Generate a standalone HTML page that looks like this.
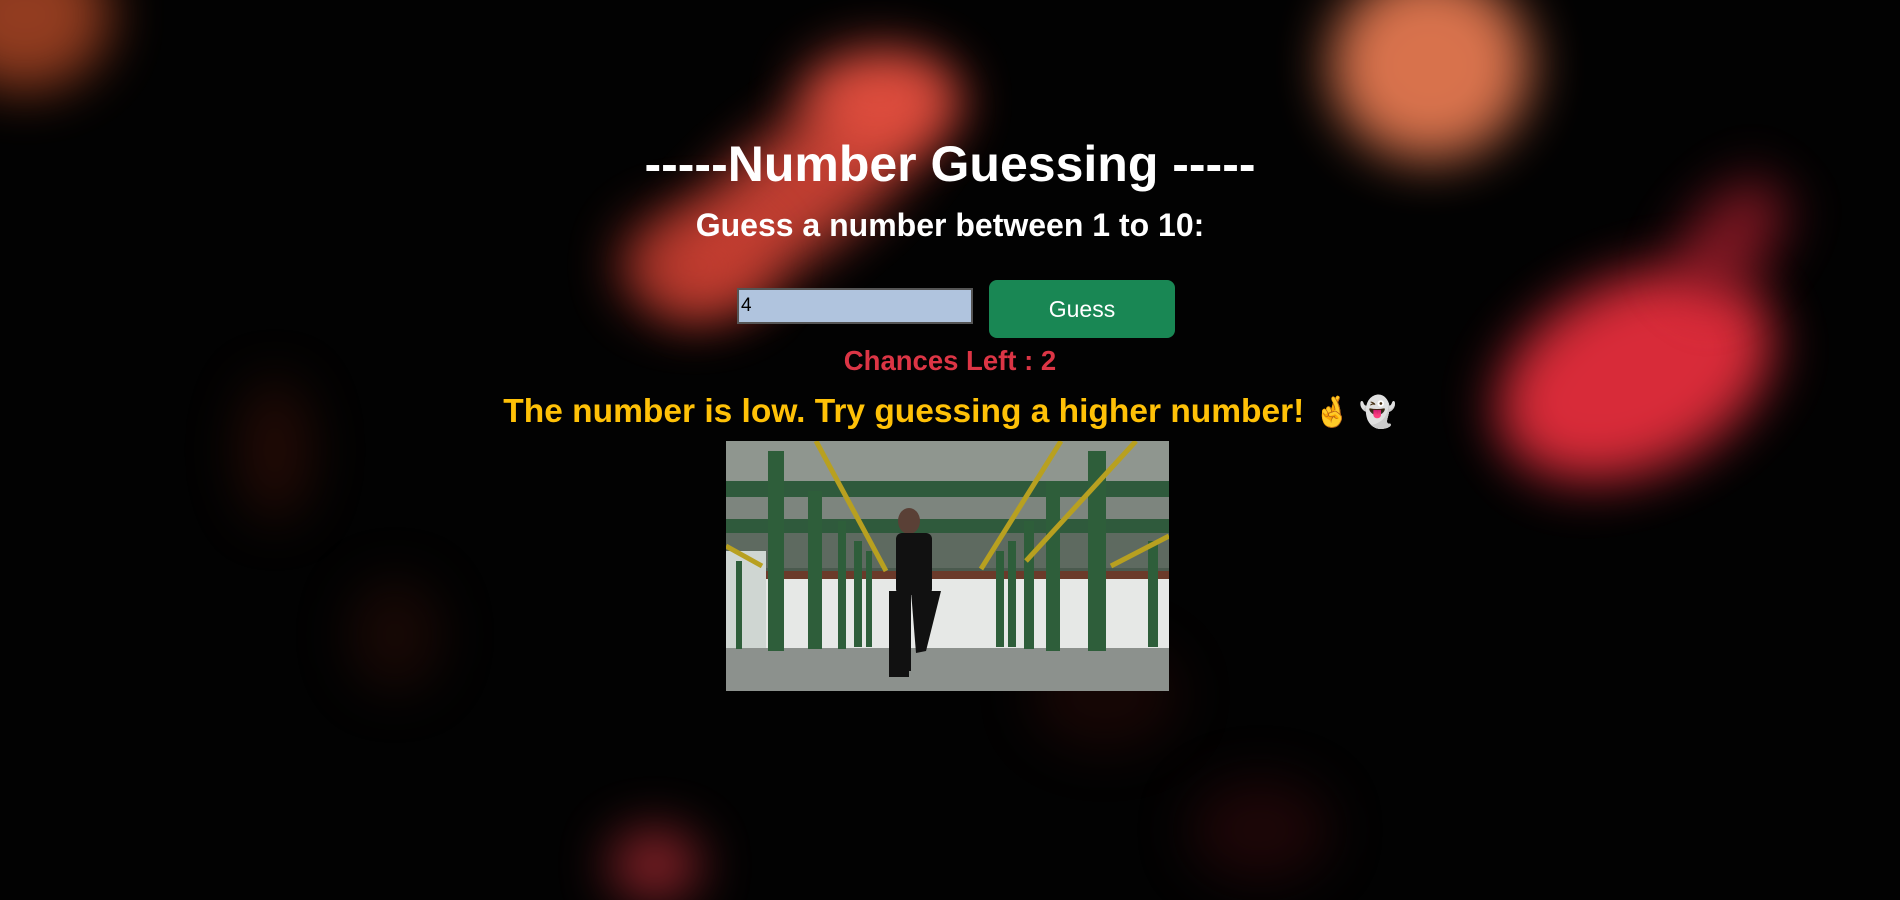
<!DOCTYPE html>
<html><head><meta charset="utf-8"><style>
html,body{margin:0;width:1900px;height:876px;overflow:hidden;background:#020202;font-family:"Liberation Sans",sans-serif}
.b{position:absolute;border-radius:50%;filter:blur(26px)}
.c{position:absolute;left:0;width:1900px;text-align:center}
</style></head><body>
<div class="b" style="left:-60px;top:-60px;width:170px;height:150px;background:#c2502a;opacity:.75"></div>
<div class="b" style="left:630px;top:130px;width:340px;height:120px;background:#e0493a;transform:rotate(-38deg);opacity:.85"></div>
<div class="b" style="left:800px;top:50px;width:160px;height:100px;background:#e65040;opacity:.9"></div>
<div class="b" style="left:620px;top:210px;width:150px;height:110px;background:#c53d30;opacity:.8"></div>
<div class="b" style="left:1330px;top:-30px;width:200px;height:190px;background:#f07f55;opacity:.9"></div>
<div class="b" style="left:1490px;top:280px;width:290px;height:190px;background:#f0303f;opacity:.9;transform:rotate(-25deg)"></div>
<div class="b" style="left:1660px;top:200px;width:140px;height:80px;background:#b02030;opacity:.7;transform:rotate(-50deg)"></div>
<div class="b" style="left:240px;top:380px;width:70px;height:140px;background:#3a120a;opacity:.6"></div>
<div class="b" style="left:350px;top:580px;width:90px;height:110px;background:#30100a;opacity:.5"></div>
<div class="b" style="left:610px;top:830px;width:90px;height:70px;background:#c2303a;opacity:.7"></div>
<div class="b" style="left:1190px;top:780px;width:140px;height:100px;background:#300a0c;opacity:.6"></div>
<div class="b" style="left:1030px;top:640px;width:150px;height:110px;background:#300c0a;opacity:.45"></div>

<div class="c" style="top:134px;font-size:50px;font-weight:bold;color:#fff;line-height:60px">-----Number Guessing -----</div>
<div class="c" style="top:206px;font-size:32px;font-weight:bold;color:#fff;line-height:38px">Guess a number between 1 to 10:</div>
<div style="position:absolute;left:737px;top:288px;width:230px;height:32px;background:#b0c4de;border:2px solid #555;font-size:19px;line-height:32px;color:#000;padding-left:2px;box-sizing:content-box">4</div>
<div style="position:absolute;left:989px;top:280px;width:186px;height:58px;background:#198754;border-radius:8px;color:#fff;font-size:23px;line-height:58px;text-align:center">Guess</div>
<div class="c" style="top:344px;font-size:27.5px;font-weight:bold;color:#dc3545;line-height:34px">Chances Left : 2</div>
<div class="c" style="top:391px;font-size:33.5px;font-weight:bold;color:#ffc107;line-height:42px">The number is low. Try guessing a higher number! <span style="font-size:30px">🤞 👻</span></div>

<svg style="position:absolute;left:726px;top:441px" width="443" height="250" viewBox="0 0 443 250">
<rect width="443" height="250" fill="#707a72"/>
<rect width="443" height="130" fill="#4a5a4e"/>
<rect y="0" width="443" height="40" fill="#8f968f"/>
<rect y="40" width="443" height="16" fill="#2f5a3c"/>
<rect y="56" width="443" height="22" fill="#7d857e"/>
<rect y="78" width="443" height="14" fill="#2f5a3c"/>
<rect y="92" width="443" height="35" fill="#5e6a60"/>
<rect y="130" width="443" height="78" fill="#e6e8e6"/>
<rect y="130" width="443" height="8" fill="#6b3a2a"/>
<rect x="0" y="110" width="40" height="98" fill="#cfd6d2"/>
<rect y="207" width="443" height="43" fill="#8c918d"/>
<g fill="#2e5e3a">
<rect x="42" y="10" width="16" height="200"/><rect x="82" y="50" width="14" height="158"/>
<rect x="112" y="80" width="8" height="128"/><rect x="128" y="100" width="8" height="106"/>
<rect x="140" y="110" width="6" height="96"/><rect x="270" y="110" width="8" height="96"/>
<rect x="282" y="100" width="8" height="106"/><rect x="298" y="80" width="10" height="128"/>
<rect x="320" y="40" width="14" height="170"/><rect x="362" y="10" width="18" height="200"/>
<rect x="422" y="100" width="10" height="106"/><rect x="10" y="120" width="6" height="88"/>
</g>
<g stroke="#b8a020" stroke-width="5">
<line x1="90" y1="0" x2="160" y2="130"/><line x1="335" y1="0" x2="255" y2="128"/><line x1="410" y1="0" x2="300" y2="120"/>
<line x1="0" y1="105" x2="36" y2="125"/><line x1="443" y1="95" x2="385" y2="125"/>
</g>
<g fill="#111">
<ellipse cx="183" cy="80" rx="11" ry="13" fill="#5a4036"/>
<rect x="170" y="92" width="36" height="62" rx="6"/>
<rect x="163" y="150" width="22" height="80"/>
<path d="M185 150 L215 150 L200 210 L190 212 Z"/>
<rect x="163" y="228" width="20" height="8"/>
</g>
</svg>
</body></html>
